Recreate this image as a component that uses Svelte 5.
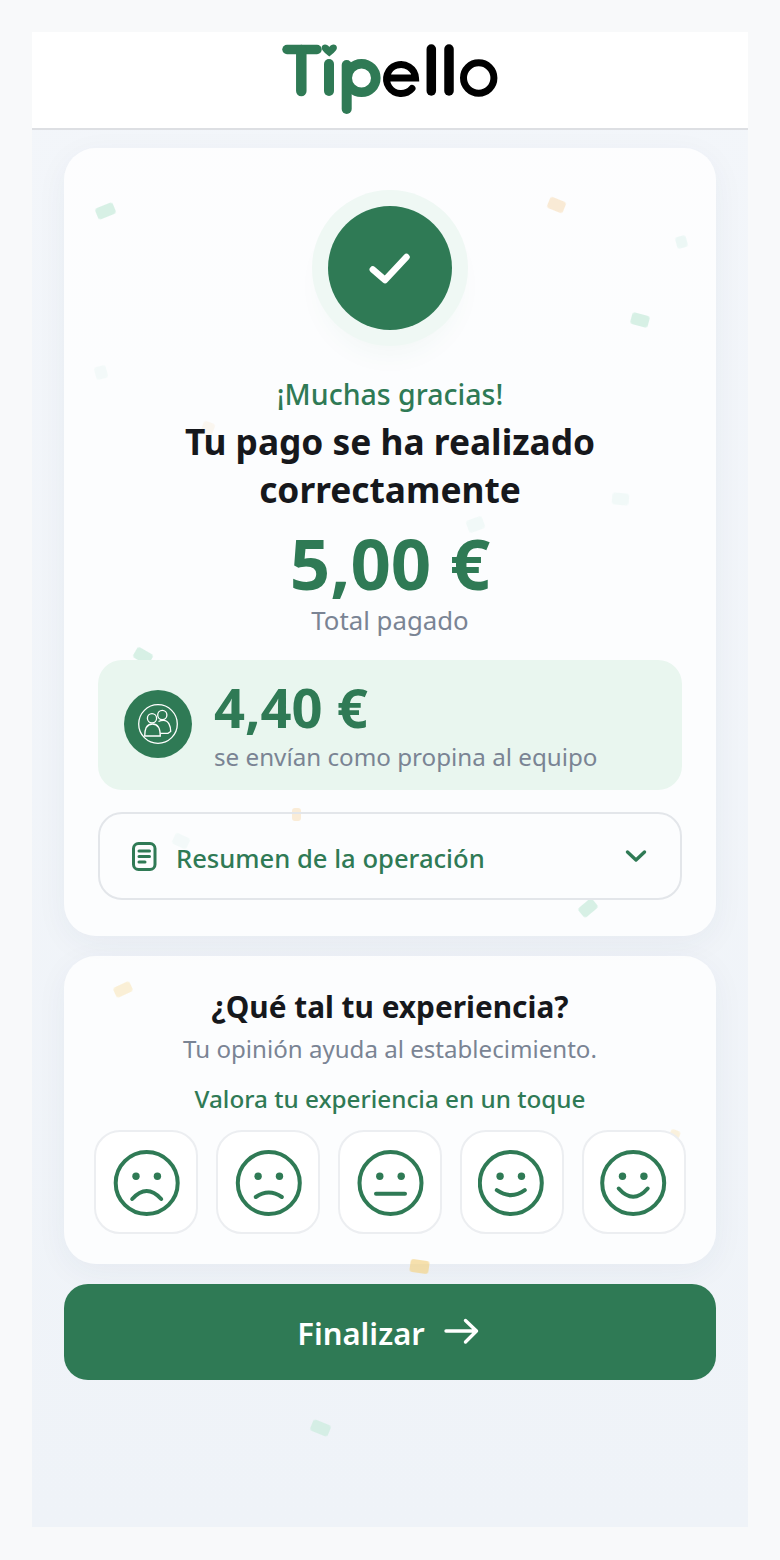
<script>
  const confetti = [
    { x: 96, y: 205, w: 19, h: 12, r: -22, c: "#bfe8d6", o: 0.6 },
    { x: 548, y: 199, w: 17, h: 12, r: 22, c: "#f7d9ae", o: 0.5 },
    { x: 676, y: 236, w: 11, h: 12, r: -15, c: "#d5f0ea", o: 0.4 },
    { x: 631, y: 314, w: 18, h: 12, r: 15, c: "#bfe8d6", o: 0.6 },
    { x: 95, y: 366, w: 12, h: 13, r: -15, c: "#dff3ee", o: 0.3 },
    { x: 202, y: 422, w: 12, h: 12, r: 20, c: "#f7e3c4", o: 0.25 },
    { x: 612, y: 493, w: 17, h: 12, r: 5, c: "#dff3ee", o: 0.35 },
    { x: 467, y: 518, w: 17, h: 13, r: -20, c: "#dff3ee", o: 0.35 },
    { x: 134, y: 650, w: 18, h: 12, r: 30, c: "#bfe8d6", o: 0.6 },
    { x: 292, y: 808, w: 9, h: 13, r: 0, c: "#f9dfb8", o: 0.55 },
    { x: 173, y: 835, w: 16, h: 12, r: 25, c: "#dff3ee", o: 0.3 },
    { x: 579, y: 902, w: 18, h: 12, r: -40, c: "#bfe8d6", o: 0.6 },
    { x: 114, y: 984, w: 18, h: 11, r: -25, c: "#f9e7bd", o: 0.6 },
    { x: 670, y: 1130, w: 10, h: 8, r: 20, c: "#f9e7bd", o: 0.5 },
    { x: 410, y: 1260, w: 19, h: 13, r: 8, c: "#f4d58c", o: 0.7 },
    { x: 311, y: 1422, w: 19, h: 12, r: 22, c: "#c4ebd9", o: 0.6 },
  ]

  const faces = [
    { label: "Muy mal", dx: 0.7, mouth: "M-14.5 16Q0 0 14.5 16" },
    { label: "Mal", dx: 0.8, mouth: "M-13 14Q0 5 13 14" },
    { label: "Normal", dx: 0.5, mouth: "M-14.5 10.7H14.5" },
    { label: "Bien", dx: -1.2, mouth: "M-14 7.2Q0 17 14 7.2" },
    { label: "Muy bien", dx: -0.8, mouth: "M-14.5 5.5Q0 22 14.5 5.5" },
  ]
</script>

<div class="shell">
  {#each confetti as p}
    <i
      class="bit"
      style="left: {p.x - 32}px; top: {p.y - 32}px; width: {p.w}px; height: {p.h}px; background: {p.c}; opacity: {p.o}; transform: rotate({p.r}deg);"
    ></i>
  {/each}

  <header>
    <svg class="logo" width="216" height="70" viewBox="282 44 216 70" role="img" aria-label="Tipello">
      <g fill="none" stroke-linecap="round">
        <g stroke="#2f7a55">
          <path stroke-width="9.5" d="M287 49.5H317" />
          <path stroke-width="10.5" d="M301.3 50V91" />
          <path stroke-width="10" d="M329 64V91" />
          <path stroke-width="10" d="M346.7 65V109" />
          <circle cx="361.5" cy="78" r="14.3" stroke-width="9.6" />
        </g>
        <g stroke="#000">
          <path stroke-width="7" d="M389 78H415.5A14.5 14.5 0 1 0 412 88.5" />
          <path stroke-width="9.5" d="M431.3 49V91" />
          <path stroke-width="9.5" d="M449 49V91" />
          <circle cx="478.7" cy="78" r="15.2" stroke-width="7" />
        </g>
      </g>
      <path fill="#2f7a55" d="M329.3 56.5C325 53 321.7 50.6 321.7 47.8C321.7 45.6 323.4 44.6 325 44.6C326.9 44.6 328.4 45.6 329.3 47C330.2 45.6 331.7 44.6 333.6 44.6C335.2 44.6 336.9 45.6 336.9 47.8C336.9 50.6 333.6 53 329.3 56.5Z" />
    </svg>
  </header>

  <main>
    <section class="card result">
      <div class="tick">
        <svg width="44" height="44" viewBox="0 -1 44 44" fill="none" stroke="#fff" stroke-width="6.5" stroke-linecap="round" stroke-linejoin="round" aria-hidden="true">
          <path d="M4.8 22.5L17 33L38.5 10" />
        </svg>
      </div>
      <p class="thanks">¡Muchas gracias!</p>
      <h1>Tu pago se ha realizado correctamente</h1>
      <p class="amount">5,00 €</p>
      <p class="amount-label">Total pagado</p>

      <div class="tip">
        <span class="tip-icon">
          <svg width="40" height="40" viewBox="0 0 40 40" fill="none" stroke="#fff" stroke-width="1.3" aria-hidden="true">
            <circle cx="20" cy="20" r="19.3" />
            <circle cx="14" cy="14.3" r="4.6" />
            <circle cx="24.3" cy="11" r="4.6" />
            <path d="M6.7 32C6.7 25.5 8 20 14.5 20C21 20 22.3 25.5 22.3 32Z" />
            <path d="M20.5 17.5C22 16.7 23.5 16.3 25.5 16.3C30.5 16.3 32.7 22 32.7 27.5L30 29.3H22.5" />
          </svg>
        </span>
        <div class="tip-text">
          <strong>4,40 €</strong>
          <span>se envían como propina al equipo</span>
        </div>
      </div>

      <button class="summary" type="button">
        <svg width="26" height="29" viewBox="0 0 26 29" fill="none" stroke="#2f7a55" stroke-width="3" stroke-linecap="round" aria-hidden="true">
          <rect x="1.5" y="1.5" width="21.5" height="26" rx="5" />
          <path d="M7 9H17.5M7 14.5H17.5M7 20H13" />
        </svg>
        <span>Resumen de la operación</span>
        <svg class="chevron" width="24" height="24" viewBox="0 0 24 24" fill="none" stroke="#2f7a55" stroke-width="3.4" stroke-linecap="round" stroke-linejoin="round" aria-hidden="true">
          <path d="M3.5 8L12 16L20.5 8" />
        </svg>
      </button>
    </section>

    <section class="card rate">
      <h2>¿Qué tal tu experiencia?</h2>
      <p class="hint">Tu opinión ayuda al establecimiento.</p>
      <p class="prompt">Valora tu experiencia en un toque</p>
      <div class="faces">
        {#each faces as f}
          <button type="button" aria-label={f.label}>
            <svg width="68" height="68" viewBox="{-34 - f.dx} -35 68 68" fill="none" stroke="#2f7a55" stroke-width="4" stroke-linecap="round">
              <circle r="31" />
              <circle cx="-10.7" cy="-6.7" r="3.7" fill="#2f7a55" stroke="none" />
              <circle cx="10.7" cy="-6.7" r="3.7" fill="#2f7a55" stroke="none" />
              <path d={f.mouth} />
            </svg>
          </button>
        {/each}
      </div>
    </section>

    <button class="finish" type="button">
      Finalizar
      <svg width="40" height="30" viewBox="0 0 40 30" fill="none" stroke="#fff" stroke-width="3.4" stroke-linecap="round" stroke-linejoin="round" aria-hidden="true">
        <path d="M3 13H33.5M22.5 2.5L33.5 13L22.5 24" />
      </svg>
    </button>
  </main>
</div>

<style>
  :global(body) {
    background: #f8f9fa;
    font-family: "Noto Sans", "Open Sans", sans-serif;
  }
  .shell {
    position: relative;
    margin: 32px;
    height: 1495px;
    background: linear-gradient(180deg, #f3f6fa, #eff3f8);
    overflow: hidden;
  }
  /* confetti sits over the card backgrounds but under their content */
  .bit {
    position: absolute;
    z-index: 1;
    border-radius: 3px;
    filter: blur(0.5px);
  }
  header {
    position: relative;
    height: 98px;
    display: flex;
    justify-content: center;
    padding-top: 12px;
    box-sizing: border-box;
    background: #fff;
    border-bottom: 2px solid #dddfe3;
  }
  main {
    position: relative;
    display: flex;
    flex-direction: column;
    gap: 20px;
    padding: 18px 32px 0;
  }
  p,
  h1,
  h2 {
    margin: 0;
  }
  .card {
    display: flex;
    flex-direction: column;
    align-items: center;
    border-radius: 32px;
    background: rgba(255, 255, 255, 0.78);
    box-shadow: 0 8px 32px rgba(40, 60, 90, 0.05);
    text-align: center;
  }
  .card > * {
    position: relative;
    z-index: 2;
  }
  .result {
    height: 788px;
    box-sizing: border-box;
    padding: 58px 34px 0;
  }
  .tick {
    display: flex;
    align-items: center;
    justify-content: center;
    width: 124px;
    height: 124px;
    border-radius: 50%;
    background: #2f7a55;
    box-shadow:
      0 0 0 16px #eff8f4,
      0 18px 32px rgba(47, 122, 85, 0.07);
  }
  .thanks {
    margin-top: 46px;
    font-size: 28.5px;
    line-height: 36px;
    font-weight: 500;
    color: #2f7a55;
  }
  h1 {
    margin-top: 5px;
    width: 480px;
    font-size: 35.3px;
    line-height: 48px;
    font-weight: 700;
    color: #16181c;
  }
  .amount {
    margin-top: 12px;
    font-size: 70.8px;
    line-height: 76px;
    font-weight: 700;
    color: #2f7a55;
  }
  .amount-label {
    margin-top: 2px;
    margin-bottom: 1px;
    font-size: 25.8px;
    line-height: 34px;
    color: #7a8494;
  }
  .tip {
    display: flex;
    align-items: center;
    gap: 22px;
    align-self: stretch;
    height: 130px;
    margin-top: 22px;
    padding: 0 26px;
    box-sizing: border-box;
    border-radius: 24px;
    background: #e9f6ef;
    text-align: left;
  }
  .tip-icon {
    display: flex;
    align-items: center;
    justify-content: center;
    width: 68px;
    height: 68px;
    margin-top: -2px;
    border-radius: 50%;
    background: #2f7a55;
  }
  .tip-text {
    display: flex;
    flex-direction: column;
    padding-bottom: 4px;
  }
  .tip-text strong {
    font-size: 54.3px;
    line-height: 68px;
    color: #2f7a55;
  }
  .tip-text span {
    font-size: 24.2px;
    line-height: 32px;
    color: #7a8494;
  }
  .summary {
    display: flex;
    align-items: center;
    align-self: stretch;
    gap: 18px;
    height: 88px;
    margin-top: 22px;
    padding: 0 32px;
    box-sizing: border-box;
    border: 2px solid #e3e6ea;
    border-radius: 24px;
    background: transparent;
    font: inherit;
    font-size: 25.6px;
    font-weight: 500;
    color: #2f7a55;
  }
  .summary span {
    margin-top: 4px;
  }
  .chevron {
    margin-left: auto;
  }
  .rate {
    height: 308px;
    box-sizing: border-box;
    padding-top: 30px;
  }
  h2 {
    font-size: 29.8px;
    line-height: 42px;
    font-weight: 700;
    color: #16181c;
  }
  .hint {
    margin-top: 4px;
    font-size: 24.1px;
    line-height: 34px;
    color: #7a8494;
  }
  .prompt {
    margin-top: 16px;
    font-size: 24.25px;
    line-height: 34px;
    font-weight: 500;
    color: #2f7a55;
  }
  .faces {
    display: flex;
    gap: 18px;
    margin-top: 14px;
  }
  .faces button {
    display: flex;
    align-items: center;
    justify-content: center;
    width: 104px;
    height: 104px;
    padding: 0;
    border: 2px solid #eceef1;
    border-radius: 26px;
    background: #fff;
  }
  .finish {
    position: relative;
    z-index: 2;
    display: flex;
    align-items: center;
    justify-content: center;
    gap: 18px;
    height: 96px;
    padding-top: 3px;
    border: 0;
    border-radius: 24px;
    background: #2f7a55;
    font: inherit;
    font-size: 31px;
    font-weight: 600;
    color: #fff;
  }
</style>
